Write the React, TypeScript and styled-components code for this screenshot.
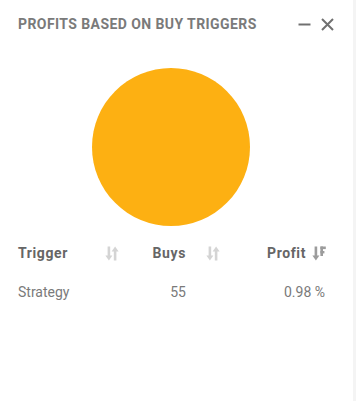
import * as React from 'react';
import styled, { createGlobalStyle } from 'styled-components';

const GlobalStyle = createGlobalStyle`
  html, body {
    margin: 0;
    padding: 0;
    background: #f4f4f4;
  }
  body {
    font-family: Roboto, 'Liberation Sans', Arial, sans-serif;
  }
`;

const Card = styled.div`
  width: 353px;
  height: 401px;
  box-sizing: border-box;
  background: #ffffff;
  padding: 14px 18px 0 18px;
  display: flex;
  flex-direction: column;
`;

const Header = styled.div`
  display: flex;
  align-items: center;
  justify-content: space-between;
  height: 20px;
`;

const Title = styled.div`
  font-size: 14px;
  line-height: 20px;
  font-weight: 700;
  letter-spacing: 0.42px;
  text-transform: uppercase;
  color: #7a7a7a;
`;

const Actions = styled.div`
  display: flex;
  align-items: center;
  gap: 10px;
  margin-right: 1px;
`;

const IconButton = styled.button`
  border: 0;
  background: transparent;
  padding: 0;
  width: 13px;
  height: 14px;
  display: flex;
  align-items: center;
  justify-content: center;
  color: #707070;
  cursor: pointer;
`;

const ChartArea = styled.svg`
  display: block;
  width: 317px;
  height: 201px;
`;

const Table = styled.div`
  display: grid;
  grid-template-columns: 107px 100px 105px;
`;

interface CellI {
  align?: 'left' | 'right';
  padRight?: number;
  gap?: number;
}

const HeadCell = styled.div<CellI>`
  height: 36px;
  display: flex;
  align-items: center;
  justify-content: ${({ align }) => (align === 'right' ? 'flex-end' : 'space-between')};
  gap: ${({ gap }) => gap || 0}px;
  padding-right: ${({ padRight }) => padRight || 0}px;
  font-size: 14px;
  line-height: 20px;
  font-weight: 700;
  letter-spacing: 0.6px;
  color: #666666;
`;

const BodyCell = styled.div<CellI>`
  height: 42px;
  display: flex;
  align-items: center;
  justify-content: ${({ align }) => (align === 'right' ? 'flex-end' : 'flex-start')};
  padding-right: ${({ padRight }) => padRight || 0}px;
  font-size: 14px;
  line-height: 20px;
  color: #7a7a7a;
`;

const SortBoth = () => (
  <svg width='14' height='15' viewBox='0 0 14 15'>
    <g fill='#d4d4d4'>
      <rect x='2.6' y='0.5' width='2.6' height='10' />
      <path d='M0.4 9.5h7L3.9 14.5z' />
      <rect x='8.8' y='4.5' width='2.6' height='10' />
      <path d='M6.6 5.5h7L10.1 0.5z' />
    </g>
  </svg>
);

const SortDesc = () => (
  <svg width='14' height='15' viewBox='0 0 14 15'>
    <g fill='#9c9c9c'>
      <rect x='2.6' y='0.5' width='2.6' height='10' />
      <path d='M0.4 9.5h7L3.9 14.5z' />
      <rect x='8.4' y='0.5' width='5.4' height='2.6' />
      <rect x='8.4' y='5' width='4' height='2.4' />
      <rect x='8.4' y='0.5' width='2.6' height='9.5' />
    </g>
  </svg>
);

const App = () => (
  <>
    <GlobalStyle />
    <Card>
      <Header>
        <Title>Profits based on buy triggers</Title>
        <Actions>
          <IconButton aria-label='minimize'>
            <svg width='13' height='13' viewBox='0 0 13 13'>
              <path d='M0.5 6.5h12' stroke='#707070' strokeWidth='2' />
            </svg>
          </IconButton>
          <IconButton aria-label='close'>
            <svg width='13' height='13' viewBox='0 0 13 13'>
              <path d='M1 1l11 11M12 1L1 12' stroke='#707070' strokeWidth='2' />
            </svg>
          </IconButton>
        </Actions>
      </Header>
      <ChartArea viewBox='0 0 317 201'>
        <circle cx='153' cy='113' r='79' fill='#fdb012' />
      </ChartArea>
      <Table>
        <HeadCell padRight={6}>
          <span>Trigger</span>
          <SortBoth />
        </HeadCell>
        <HeadCell align='right' gap={20} padRight={5}>
          <span>Buys</span>
          <SortBoth />
        </HeadCell>
        <HeadCell align='right' gap={6} padRight={4}>
          <span>Profit</span>
          <SortDesc />
        </HeadCell>
        <BodyCell>Strategy</BodyCell>
        <BodyCell align='right' padRight={39}>55</BodyCell>
        <BodyCell align='right' padRight={5}>0.98 %</BodyCell>
      </Table>
    </Card>
  </>
);

export default App;
